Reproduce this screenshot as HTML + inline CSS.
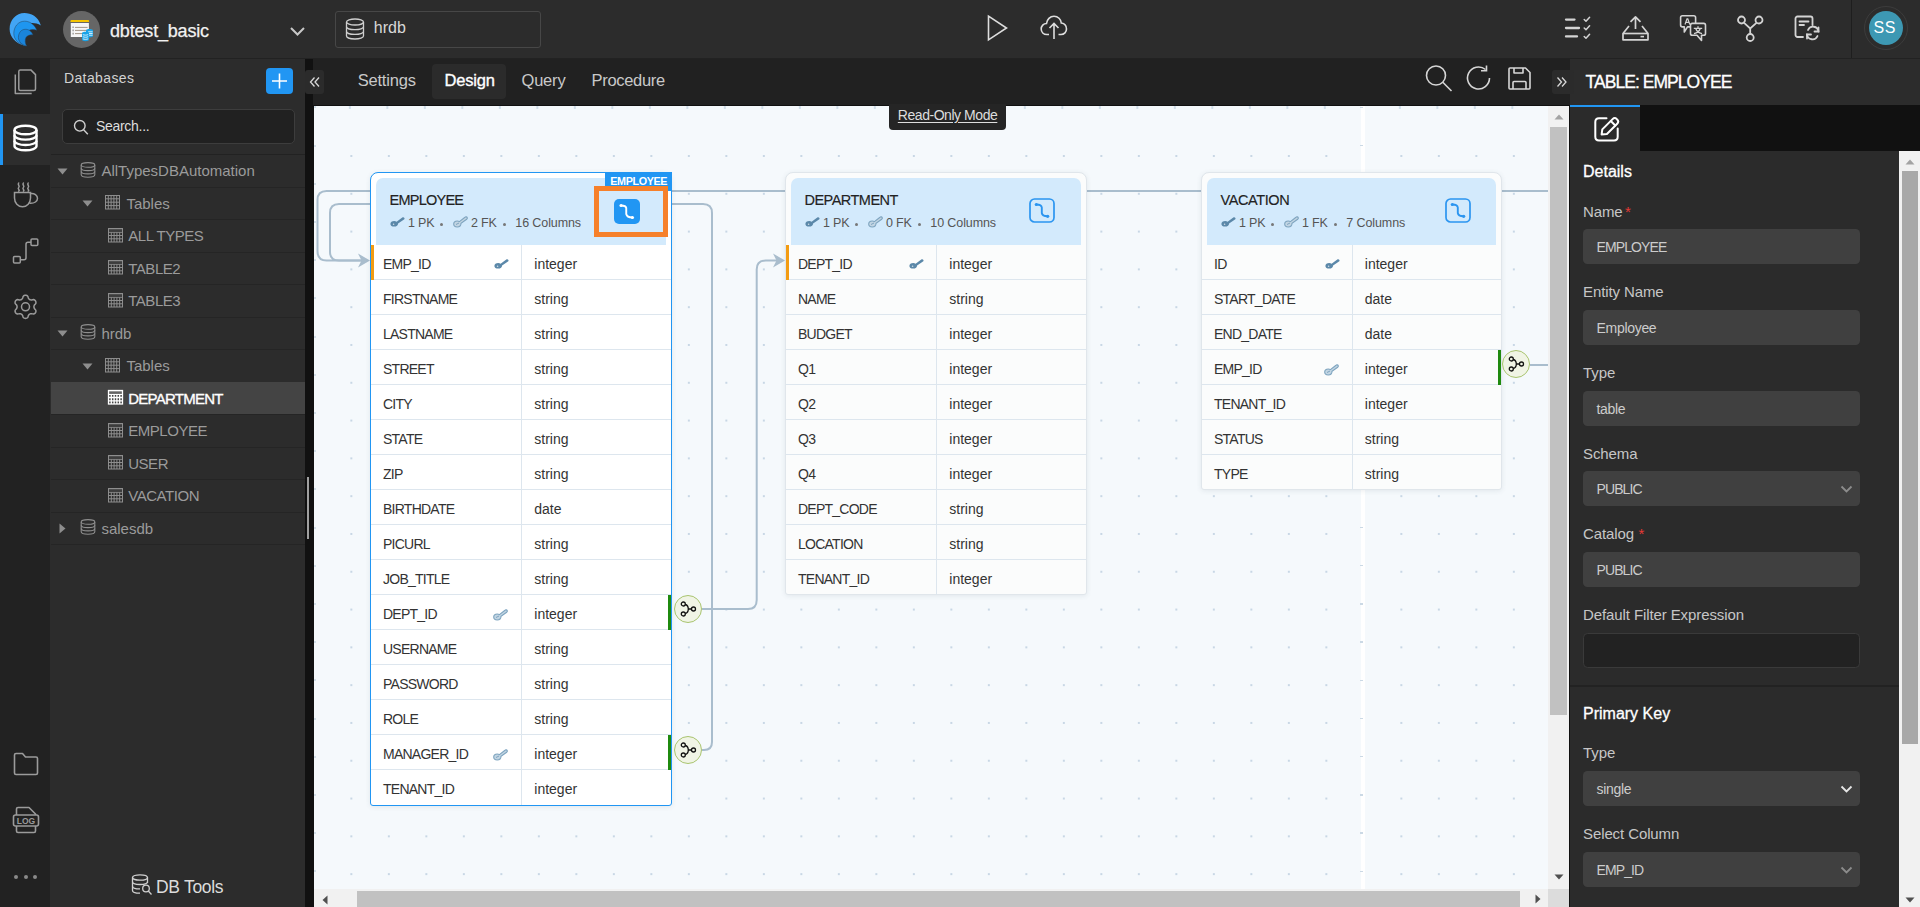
<!DOCTYPE html><html><head><meta charset="utf-8"><title>DB Design</title><style>
*{box-sizing:border-box;margin:0;padding:0}
html,body{width:1920px;height:907px;overflow:hidden;background:#2b2b2b;font-family:"Liberation Sans",sans-serif}
.a{position:absolute}
.t{position:absolute;white-space:nowrap;line-height:1}
svg{position:absolute;overflow:visible}
</style></head><body>
<div class="a" style="left:0px;top:0px;width:1920px;height:59px;background:#2c2c2c;border-bottom:1px solid #222"></div>
<div class="a" style="left:0px;top:59px;width:50px;height:848px;background:#222222"></div>
<div class="a" style="left:50px;top:59px;width:255px;height:848px;background:#2c2c2c"></div>
<div class="a" style="left:305px;top:59px;width:9px;height:848px;background:#111"></div>
<div class="a" style="left:313px;top:59px;width:1257px;height:46px;background:#212121"></div>
<div class="a" style="left:313px;top:105px;width:1257px;height:802px;background:#111"></div>
<div class="a" style="left:314px;top:106px;width:1255px;height:801px;background-color:#f5f9fc"></div>
<div class="a" style="left:316px;top:137px;width:1253px;height:770px;background-image:radial-gradient(circle,#c8d7e5 1.1px,transparent 1.3px);background-size:37.5px 37.8px;background-position:16.6px 0.1px"></div>
<div class="a" style="left:316px;top:106px;width:1253px;height:3px;background-image:radial-gradient(circle,#cfdde9 1.1px,transparent 1.3px);background-size:37.5px 3px;background-position:15.1px -0.2px"></div>
<div class="a" style="left:1361px;top:106px;width:4px;height:783px;background:#fff"></div>
<div class="a" style="left:314px;top:106.3px;width:1.5px;height:2px;background:#d3e0ea"></div>
<div class="a" style="left:314px;top:144.5px;width:1.5px;height:2px;background:#d3e0ea"></div>
<div class="a" style="left:314px;top:182.7px;width:1.5px;height:2px;background:#d3e0ea"></div>
<div class="a" style="left:314px;top:220.9px;width:1.5px;height:2px;background:#d3e0ea"></div>
<div class="a" style="left:314px;top:259.1px;width:1.5px;height:2px;background:#d3e0ea"></div>
<div class="a" style="left:314px;top:297.3px;width:1.5px;height:2px;background:#d3e0ea"></div>
<div class="a" style="left:314px;top:335.5px;width:1.5px;height:2px;background:#d3e0ea"></div>
<div class="a" style="left:314px;top:373.7px;width:1.5px;height:2px;background:#d3e0ea"></div>
<div class="a" style="left:314px;top:411.9px;width:1.5px;height:2px;background:#d3e0ea"></div>
<div class="a" style="left:314px;top:450.1px;width:1.5px;height:2px;background:#d3e0ea"></div>
<div class="a" style="left:314px;top:488.3px;width:1.5px;height:2px;background:#d3e0ea"></div>
<div class="a" style="left:314px;top:526.5px;width:1.5px;height:2px;background:#d3e0ea"></div>
<div class="a" style="left:314px;top:564.7px;width:1.5px;height:2px;background:#d3e0ea"></div>
<div class="a" style="left:314px;top:602.9px;width:1.5px;height:2px;background:#d3e0ea"></div>
<div class="a" style="left:314px;top:641.1px;width:1.5px;height:2px;background:#d3e0ea"></div>
<div class="a" style="left:314px;top:679.3px;width:1.5px;height:2px;background:#d3e0ea"></div>
<div class="a" style="left:314px;top:717.5px;width:1.5px;height:2px;background:#d3e0ea"></div>
<div class="a" style="left:314px;top:755.7px;width:1.5px;height:2px;background:#d3e0ea"></div>
<div class="a" style="left:314px;top:793.9px;width:1.5px;height:2px;background:#d3e0ea"></div>
<div class="a" style="left:314px;top:832.1px;width:1.5px;height:2px;background:#d3e0ea"></div>
<div class="a" style="left:314px;top:870.3px;width:1.5px;height:2px;background:#d3e0ea"></div>
<div class="a" style="left:1360px;top:106.5px;width:3px;height:1.6px;background:#cbd9e5"></div>
<div class="a" style="left:1360px;top:144.7px;width:3px;height:1.6px;background:#cbd9e5"></div>
<div class="a" style="left:1360px;top:526.7px;width:3px;height:1.6px;background:#cbd9e5"></div>
<div class="a" style="left:1360px;top:564.9px;width:3px;height:1.6px;background:#cbd9e5"></div>
<div class="a" style="left:1360px;top:603.1px;width:3px;height:1.6px;background:#cbd9e5"></div>
<div class="a" style="left:1360px;top:641.3px;width:3px;height:1.6px;background:#cbd9e5"></div>
<div class="a" style="left:1360px;top:679.5px;width:3px;height:1.6px;background:#cbd9e5"></div>
<div class="a" style="left:1360px;top:717.7px;width:3px;height:1.6px;background:#cbd9e5"></div>
<div class="a" style="left:1360px;top:755.9px;width:3px;height:1.6px;background:#cbd9e5"></div>
<div class="a" style="left:1360px;top:794.1px;width:3px;height:1.6px;background:#cbd9e5"></div>
<div class="a" style="left:1360px;top:832.3px;width:3px;height:1.6px;background:#cbd9e5"></div>
<div class="a" style="left:1360px;top:870.5px;width:3px;height:1.6px;background:#cbd9e5"></div>
<div class="a" style="left:1570px;top:59px;width:350px;height:46px;background:#2c2c2c"></div>
<div class="a" style="left:1570px;top:105px;width:350px;height:46px;background:#111"></div>
<div class="a" style="left:1570px;top:151px;width:329px;height:756px;background:#2b2b2b"></div>
<svg style="left:0px;top:0px;" width="50" height="50" viewBox="0 0 50 50"><path d="M40.9 25.5C38 16 31 12.9 24.5 12.9C16 12.9 9.6 20 9.6 29C9.6 37 16 43.5 24 45.5L26.5 46C21 41 19 35 21 30C24 23 33 21 40.9 25.5Z" fill="#42a5f5"/><path d="M36.9 30.2C34 23.5 29 21.2 24.5 21.2C18 21.2 13.8 27 13.8 33.5C13.8 39.5 19 44.5 26.5 46C23.5 42 23 37 25 34C27.5 30 32 28.5 36.9 30.2Z" fill="#1e96f0" stroke="#27425c" stroke-width="0.5"/><path d="M33 35C31.5 31 28.5 29.3 25.5 29.3C21 29.3 18.4 33 18.4 37.5C18.4 41.5 22 45 26.5 46C25 43 24.8 39.5 26 37.5C27.5 35.3 30 34.5 33 35Z" fill="#1a85dc" stroke="#27425c" stroke-width="0.5"/></svg>
<div class="a" style="left:63px;top:11px;width:37px;height:37px;border-radius:50%;background:#666"></div>
<svg style="left:62px;top:10px;" width="40" height="40" viewBox="0 0 40 40"><path d="M8.8 10.5H26.8L27.2 12.1H8.4Z" fill="#f5c400"/><rect x="8.8" y="9.9" width="18" height="2.2" rx="0.6" fill="#f5c400"/><rect x="8.8" y="13" width="18.1" height="14" fill="#f6f6f6"/><path d="M13 17.4H25.6M13 20.4H25.6M13 23.6H25.6" stroke="#8b7b68" stroke-width="0.8"/><path d="M10.5 16.5h1.2v1.6h-1.2zM10.5 19.6h1.2v1.6h-1.2zM10.5 22.8h1.2v1.6h-1.2z" fill="#8a8a8a"/><path d="M24 20.3C24 19.5 25.6 18.9 27.5 18.9S31 19.5 31 20.3V26C31 26.8 29.4 27.4 27.5 27.4S24 26.8 24 26Z" fill="#1aa3e8"/><path d="M26.2 21.8H30.6M26.2 23.5H30.6M26.2 25.2H30.6" stroke="#fff" stroke-width="0.8"/><path d="M20 23.1C20 22.3 21.6 21.7 23.5 21.7S27 22.3 27 23.1V29.8C27 30.6 25.4 31.2 23.5 31.2S20 30.6 20 29.8Z" fill="#1aa3e8"/><path d="M20.8 24.6C22.3 25.3 24.7 25.3 26.2 24.6M20.8 26.7C22.3 27.4 24.7 27.4 26.2 26.7M20.8 28.8C22.3 29.5 24.7 29.5 26.2 28.8" stroke="#fff" stroke-width="0.8" fill="none"/></svg>
<div class="t" style="left:110.00px;top:21.66px;font-size:18px;color:#f2f2f2;font-weight:normal;letter-spacing:-0.18px;-webkit-text-stroke:0.25px #f2f2f2">dbtest_basic</div>
<svg style="left:289px;top:26px;" width="17" height="10" viewBox="0 0 17 10"><path d="M2 2 L8.5 8.5 L15 2" fill="none" stroke="#c8c8c8" stroke-width="2"/></svg>
<div class="a" style="left:335px;top:11px;width:206px;height:37px;border:1px solid #474747;border-radius:3px"></div>
<svg style="left:345px;top:18px;" width="20" height="22" viewBox="0 0 20 22"><g fill="none" stroke="#cfcfcf" stroke-width="1.3"><ellipse cx="10" cy="4" rx="8.5" ry="3"/><path d="M1.5 4v14c0 1.7 3.8 3 8.5 3s8.5-1.3 8.5-3V4"/><path d="M1.5 8.7c0 1.7 3.8 3 8.5 3s8.5-1.3 8.5-3M1.5 13.4c0 1.7 3.8 3 8.5 3s8.5-1.3 8.5-3"/></g></svg>
<div class="t" style="left:373.80px;top:19.96px;font-size:16px;color:#d8d8d8;font-weight:normal;letter-spacing:0px;">hrdb</div>
<svg style="left:986px;top:14px;" width="23" height="28" viewBox="0 0 23 28"><path d="M2.5 2.2 L20.5 14 L2.5 25.8Z" fill="none" stroke="#dedede" stroke-width="1.6" stroke-linejoin="miter"/></svg>
<svg style="left:1040px;top:15px;" width="28" height="25" viewBox="0 0 28 25"><g fill="none" stroke="#dedede" stroke-width="1.6"><path d="M9 19.5H7C3.5 19.5 1.2 17 1.2 14C1.2 11 3.5 8.5 6.5 8.5C7 4.5 10 1.3 14 1.3C18 1.3 21 4.3 21.3 8C24.5 8.5 26.5 11 26.5 14C26.5 17 24.2 19.5 21 19.5H18.5"/><path d="M14 24V8.5M9.5 13L14 8.5L18.5 13"/></g></svg>
<svg style="left:1560px;top:10px;" width="35" height="35" viewBox="0 0 35 35"><g fill="none" stroke="#d4d4d4" stroke-width="2.3" stroke-linecap="round"><path d="M6 9.6H14.5M6 18H19M6 26.4H17"/></g><g fill="none" stroke="#d4d4d4" stroke-width="1.5" stroke-linecap="round" stroke-linejoin="round"><path d="M24.2 9.5L26 11.3L29.6 7.3M24.2 18L26 19.8L29.6 15.8M24.2 26.5L26 28.3L29.6 24.3"/></g></svg>
<svg style="left:1621px;top:15px;" width="29" height="27" viewBox="0 0 29 27"><g fill="none" stroke="#d4d4d4" stroke-width="1.7" stroke-linejoin="round"><path d="M14.5 14V2M9.5 6.8L14.5 1.8L19.5 6.8"/><path d="M8 11L2 18.5V24.8H27V18.5L21 11"/><path d="M2 18.5H27"/></g><rect x="19.5" y="20.8" width="3.5" height="1.6" fill="#d4d4d4"/></svg>
<svg style="left:1672px;top:8px;" width="40" height="40" viewBox="0 0 40 40"><g stroke="#d4d4d4" stroke-width="1.6" stroke-linejoin="round"><path d="M10.4 7.7H21.8Q23.6 7.7 23.6 9.5V17.1Q23.6 18.9 21.8 18.9H15.5L12.3 24V18.9H10.4Q8.6 18.9 8.6 17.1V9.5Q8.6 7.7 10.4 7.7Z" fill="none"/><path d="M20.3 15.4H31.7Q33.5 15.4 33.5 17.2V25.5Q33.5 27.3 31.7 27.3H29.5V32.5L25 27.3H20.3Q18.5 27.3 18.5 25.5V17.2Q18.5 15.4 20.3 15.4Z" fill="#2c2c2c"/></g><path d="M13 16.5L15 10.8H15.8L17.8 16.5M13.8 14.4H17" fill="none" stroke="#d4d4d4" stroke-width="1.2"/><path d="M21.8 20.3H30.2M26 18.3V20.3M23.6 20.3C24.6 23.3 27 25 30 25.6M28.4 20.3C27.4 23.3 25 25 22 25.6" fill="none" stroke="#d4d4d4" stroke-width="1.3"/></svg>
<svg style="left:1736px;top:15px;" width="29" height="28" viewBox="0 0 29 28"><g fill="none" stroke="#d4d4d4" stroke-width="1.8"><circle cx="5.5" cy="5" r="3.5"/><circle cx="23" cy="5" r="3.5"/><circle cx="14.2" cy="22.5" r="3.5"/><path d="M7.8 7.7L14.2 13.5L20.7 7.7M14.2 13.5V19"/></g></svg>
<svg style="left:1794px;top:15px;" width="28" height="26" viewBox="0 0 28 26"><g fill="none" stroke="#d4d4d4" stroke-width="1.8" stroke-linecap="round"><path d="M9 22H3.5C2.4 22 1.5 21.1 1.5 20V3.5C1.5 2.4 2.4 1.5 3.5 1.5H16.5C17.6 1.5 18.5 2.4 18.5 3.5V10"/><path d="M5.5 6.5H14.5M5.5 10H10"/><path d="M24.5 16.5A5.5 5.5 0 0 0 14 15M13 19.5A5.5 5.5 0 0 0 23.5 21"/><path d="M24.5 12.5V16.5H20.5M13 23.5V19.5H17"/></g></svg>
<div class="a" style="left:1851px;top:0px;width:1px;height:58px;background:#1e1e1e"></div>
<div class="a" style="left:1864px;top:5.5px;width:44px;height:44px;border-radius:50%;border:1px solid #3c3c3c"></div>
<div class="a" style="left:1869px;top:10.5px;width:34px;height:34px;border-radius:50%;background:#3d98b3"></div>
<div class="t" style="left:1873.50px;top:19.96px;font-size:16px;color:#ffffff;font-weight:normal;letter-spacing:0.5px;">SS</div>
<div class="a" style="left:0px;top:114px;width:50px;height:51px;background:#2d2d2d"></div>
<div class="a" style="left:0px;top:114px;width:3px;height:51px;background:#2196f3"></div>
<svg style="left:13px;top:67px;" width="26" height="29" viewBox="0 0 26 29"><g fill="none" stroke="#9b9b9b" stroke-width="1.5" stroke-linejoin="round"><path d="M7.3 2.9H17.8L22.5 7.6V22.1C22.5 22.9 21.8 23.6 21 23.6H7.3C6.5 23.6 5.8 22.9 5.8 22.1V4.4C5.8 3.6 6.5 2.9 7.3 2.9Z"/><path d="M2.3 7.4V26.4H18.7"/></g></svg>
<svg style="left:12px;top:124px;" width="27" height="28" viewBox="0 0 27 28"><g fill="none" stroke="#fff" stroke-width="2.4"><ellipse cx="13.5" cy="6" rx="11" ry="4.3"/><path d="M2.5 6V22C2.5 24.4 7.4 26.3 13.5 26.3S24.5 24.4 24.5 22V6"/><path d="M2.5 11.3C2.5 13.7 7.4 15.6 13.5 15.6S24.5 13.7 24.5 11.3M2.5 16.7C2.5 19.1 7.4 21 13.5 21S24.5 19.1 24.5 16.7"/></g></svg>
<svg style="left:0px;top:170px;" width="50" height="100" viewBox="0 0 50 100"><g fill="none" stroke="#9b9b9b" stroke-width="1.5" stroke-linecap="round"><path d="M14.5 22.5H30.5V28C30.5 32.8 27 36.8 22.5 36.8S14.5 32.8 14.5 28Z"/><path d="M30.5 23.5C34.5 23 37.5 25.3 37.5 28.3S34.5 33.5 30 33.3"/><path d="M18.7 13C16.9 14.5 20.5 16 18.7 17.5S20.5 20 18.7 21.2M23.4 13C21.6 14.5 25.2 16 23.4 17.5S25.2 20 23.4 21.2M28.2 13C26.4 14.5 30 16 28.2 17.5S30 20 28.2 21.2"/></g><g fill="none" stroke="#9b9b9b" stroke-width="1.5" stroke-linejoin="round"><rect x="13.5" y="86.5" width="6.8" height="6.5" rx="1"/><rect x="31" y="69" width="6.8" height="6.5" rx="1"/><path d="M20.3 89.8H24C25.3 89.8 26 89.1 26 87.8V74.3C26 73 26.7 72.3 28 72.3H31"/></g></svg>
<svg style="left:12px;top:293px;" width="28" height="28" viewBox="0 0 28 28"><g fill="none" stroke="#9b9b9b" stroke-width="1.5" stroke-linejoin="round"><path d="M21.90 13.80 L21.94 14.24 L22.04 14.70 L22.23 15.18 L22.51 15.71 L23.16 16.39 L23.76 17.13 L23.92 17.80 L23.92 18.44 L23.79 19.04 L23.55 19.60 L23.19 20.09 L22.73 20.51 L22.18 20.83 L21.52 21.02 L20.57 20.87 L19.66 20.64 L19.06 20.67 L18.55 20.75 L18.10 20.88 L17.70 21.07 L17.34 21.33 L16.99 21.65 L16.67 22.05 L16.35 22.56 L16.09 23.46 L15.74 24.36 L15.25 24.83 L14.69 25.15 L14.10 25.34 L13.50 25.40 L12.90 25.34 L12.31 25.15 L11.75 24.83 L11.26 24.36 L10.91 23.46 L10.65 22.56 L10.33 22.05 L10.01 21.65 L9.66 21.33 L9.30 21.07 L8.90 20.88 L8.45 20.75 L7.94 20.67 L7.34 20.64 L6.43 20.87 L5.48 21.02 L4.82 20.83 L4.27 20.51 L3.81 20.09 L3.45 19.60 L3.21 19.04 L3.08 18.44 L3.08 17.80 L3.24 17.13 L3.84 16.39 L4.49 15.71 L4.77 15.18 L4.96 14.70 L5.06 14.24 L5.10 13.80 L5.06 13.36 L4.96 12.90 L4.77 12.42 L4.49 11.89 L3.84 11.21 L3.24 10.47 L3.08 9.80 L3.08 9.16 L3.21 8.56 L3.45 8.00 L3.81 7.51 L4.27 7.09 L4.82 6.77 L5.48 6.58 L6.43 6.73 L7.34 6.96 L7.94 6.93 L8.45 6.85 L8.90 6.72 L9.30 6.53 L9.66 6.27 L10.01 5.95 L10.33 5.55 L10.65 5.04 L10.91 4.14 L11.26 3.24 L11.75 2.77 L12.31 2.45 L12.90 2.26 L13.50 2.20 L14.10 2.26 L14.69 2.45 L15.25 2.77 L15.74 3.24 L16.09 4.14 L16.35 5.04 L16.67 5.55 L16.99 5.95 L17.34 6.27 L17.70 6.53 L18.10 6.72 L18.55 6.85 L19.06 6.93 L19.66 6.96 L20.57 6.73 L21.52 6.58 L22.18 6.77 L22.73 7.09 L23.19 7.51 L23.55 8.00 L23.79 8.56 L23.92 9.16 L23.92 9.80 L23.76 10.47 L23.16 11.21 L22.51 11.89 L22.23 12.42 L22.04 12.90 L21.94 13.36Z"/><circle cx="13.5" cy="13.8" r="4"/></g></svg>
<svg style="left:12px;top:752px;" width="28" height="24" viewBox="0 0 28 24"><g fill="none" stroke="#9b9b9b" stroke-width="1.6" stroke-linejoin="round"><path d="M2.5 3C2.5 2 3 1.5 4 1.5H10.5L13.5 5H24C25 5 25.5 5.5 25.5 6.5V21C25.5 22 25 22.5 24 22.5H4C3 22.5 2.5 22 2.5 21Z"/></g></svg>
<svg style="left:12px;top:806px;" width="28" height="28" viewBox="0 0 28 28"><g fill="none" stroke="#9b9b9b" stroke-width="1.6" stroke-linejoin="round"><path d="M4.5 9V3C4.5 2 5 1.5 6 1.5H17L23.5 8V9"/><path d="M4.5 20V25C4.5 26 5 26.5 6 26.5H22C23 26.5 23.5 26 23.5 25V20"/><rect x="1.5" y="9" width="25" height="11" rx="2"/></g><text x="14" y="17.8" text-anchor="middle" font-size="8.5" font-weight="bold" font-family="Liberation Sans" fill="#9b9b9b">LOG</text></svg>
<div class="a" style="left:14.2px;top:874.6px;width:4px;height:4px;border-radius:50%;background:#8a8a8a"></div>
<div class="a" style="left:23.6px;top:874.6px;width:4px;height:4px;border-radius:50%;background:#8a8a8a"></div>
<div class="a" style="left:32.6px;top:874.6px;width:4px;height:4px;border-radius:50%;background:#8a8a8a"></div>
<div class="t" style="left:63.90px;top:71.15px;font-size:14px;color:#d2d2d2;font-weight:normal;letter-spacing:0.4px;">Databases</div>
<div class="a" style="left:266px;top:68px;width:27px;height:26px;border-radius:4px;background:#2196f3"></div>
<svg style="left:266px;top:68px;" width="27" height="26" viewBox="0 0 27 26"><path d="M13.5 5.5V20.5M6 13H21" stroke="#fff" stroke-width="1.6"/></svg>
<div class="a" style="left:61.5px;top:109px;width:233px;height:34.5px;border-radius:5px;background:#212121;border:1px solid #3d3d3d"></div>
<svg style="left:73px;top:119px;" width="16" height="17" viewBox="0 0 16 17"><g fill="none" stroke="#d0d0d0" stroke-width="1.4"><circle cx="6.8" cy="6.8" r="5.3"/><path d="M10.6 10.8L14.8 15.2"/></g></svg>
<div class="t" style="left:96.00px;top:119.05px;font-size:14px;color:#dedede;font-weight:normal;letter-spacing:-0.3px;">Search...</div>
<div class="a" style="left:51px;top:154px;width:254px;height:1px;background:#222"></div>
<div class="a" style="left:51px;top:186.5px;width:254px;height:1px;background:#252525"></div>
<svg style="left:57px;top:167.5px;" width="11" height="7" viewBox="0 0 11 7"><path d="M0.5 0.5H10.5L5.5 6.5Z" fill="#8e8e8e"/></svg>
<svg style="left:79.5px;top:161.5px;" width="16" height="16" viewBox="0 0 16 16"><g fill="none" stroke="#8e8e8e" stroke-width="1.1"><ellipse cx="8" cy="2.9" rx="6.8" ry="2.3"/><path d="M1.2 2.9V12.8C1.2 14.1 4.2 15.2 8 15.2S14.8 14.1 14.8 12.8V2.9"/><path d="M1.2 6.2C1.2 7.5 4.2 8.6 8 8.6S14.8 7.5 14.8 6.2M1.2 9.5C1.2 10.8 4.2 11.9 8 11.9S14.8 10.8 14.8 9.5"/></g></svg>
<div class="t" style="left:101.40px;top:163.30px;font-size:15px;color:#9b9b9b;font-weight:normal;letter-spacing:0px;">AllTypesDBAutomation</div>
<div class="a" style="left:51px;top:219.0px;width:254px;height:1px;background:#252525"></div>
<svg style="left:82px;top:200.0px;" width="11" height="7" viewBox="0 0 11 7"><path d="M0.5 0.5H10.5L5.5 6.5Z" fill="#8e8e8e"/></svg>
<svg style="left:104.8px;top:195.2px;" width="15" height="15" viewBox="0 0 15 15"><g fill="none" stroke="#8e8e8e" stroke-width="1.0"><rect x="0.5" y="0.5" width="14" height="13.5"/><path d="M0.5 3.8H14.5M0.5 7.2H14.5M0.5 10.6H14.5M3.3 0.5V14M6.1 0.5V14M8.9 0.5V14M11.7 0.5V14"/></g></svg>
<div class="t" style="left:126.40px;top:195.80px;font-size:15px;color:#9b9b9b;font-weight:normal;letter-spacing:0px;">Tables</div>
<div class="a" style="left:51px;top:251.5px;width:254px;height:1px;background:#252525"></div>
<svg style="left:107.6px;top:227.7px;" width="15" height="15" viewBox="0 0 15 15"><g fill="none" stroke="#8e8e8e" stroke-width="1.0"><rect x="0.5" y="0.5" width="14" height="13.5"/><path d="M0.5 4.3H14.5M0.5 7.5H14.5M0.5 10.8H14.5M3.3 4.3V14M6.1 4.3V14M8.9 4.3V14M11.7 4.3V14"/></g><rect x="0.5" y="0.5" width="14" height="2" fill="#8e8e8e" opacity="0.35"/></svg>
<div class="t" style="left:128.20px;top:228.30px;font-size:15px;color:#9b9b9b;font-weight:normal;letter-spacing:-0.45px;">ALL TYPES</div>
<div class="a" style="left:51px;top:284.0px;width:254px;height:1px;background:#252525"></div>
<svg style="left:107.6px;top:260.2px;" width="15" height="15" viewBox="0 0 15 15"><g fill="none" stroke="#8e8e8e" stroke-width="1.0"><rect x="0.5" y="0.5" width="14" height="13.5"/><path d="M0.5 4.3H14.5M0.5 7.5H14.5M0.5 10.8H14.5M3.3 4.3V14M6.1 4.3V14M8.9 4.3V14M11.7 4.3V14"/></g><rect x="0.5" y="0.5" width="14" height="2" fill="#8e8e8e" opacity="0.35"/></svg>
<div class="t" style="left:128.20px;top:260.80px;font-size:15px;color:#9b9b9b;font-weight:normal;letter-spacing:-0.45px;">TABLE2</div>
<div class="a" style="left:51px;top:316.5px;width:254px;height:1px;background:#252525"></div>
<svg style="left:107.6px;top:292.7px;" width="15" height="15" viewBox="0 0 15 15"><g fill="none" stroke="#8e8e8e" stroke-width="1.0"><rect x="0.5" y="0.5" width="14" height="13.5"/><path d="M0.5 4.3H14.5M0.5 7.5H14.5M0.5 10.8H14.5M3.3 4.3V14M6.1 4.3V14M8.9 4.3V14M11.7 4.3V14"/></g><rect x="0.5" y="0.5" width="14" height="2" fill="#8e8e8e" opacity="0.35"/></svg>
<div class="t" style="left:128.20px;top:293.30px;font-size:15px;color:#9b9b9b;font-weight:normal;letter-spacing:-0.45px;">TABLE3</div>
<div class="a" style="left:51px;top:349.0px;width:254px;height:1px;background:#252525"></div>
<svg style="left:57px;top:330.0px;" width="11" height="7" viewBox="0 0 11 7"><path d="M0.5 0.5H10.5L5.5 6.5Z" fill="#8e8e8e"/></svg>
<svg style="left:79.5px;top:324.0px;" width="16" height="16" viewBox="0 0 16 16"><g fill="none" stroke="#8e8e8e" stroke-width="1.1"><ellipse cx="8" cy="2.9" rx="6.8" ry="2.3"/><path d="M1.2 2.9V12.8C1.2 14.1 4.2 15.2 8 15.2S14.8 14.1 14.8 12.8V2.9"/><path d="M1.2 6.2C1.2 7.5 4.2 8.6 8 8.6S14.8 7.5 14.8 6.2M1.2 9.5C1.2 10.8 4.2 11.9 8 11.9S14.8 10.8 14.8 9.5"/></g></svg>
<div class="t" style="left:101.40px;top:325.80px;font-size:15px;color:#9b9b9b;font-weight:normal;letter-spacing:0px;">hrdb</div>
<div class="a" style="left:51px;top:381.5px;width:254px;height:1px;background:#252525"></div>
<svg style="left:82px;top:362.5px;" width="11" height="7" viewBox="0 0 11 7"><path d="M0.5 0.5H10.5L5.5 6.5Z" fill="#8e8e8e"/></svg>
<svg style="left:104.8px;top:357.7px;" width="15" height="15" viewBox="0 0 15 15"><g fill="none" stroke="#8e8e8e" stroke-width="1.0"><rect x="0.5" y="0.5" width="14" height="13.5"/><path d="M0.5 3.8H14.5M0.5 7.2H14.5M0.5 10.6H14.5M3.3 0.5V14M6.1 0.5V14M8.9 0.5V14M11.7 0.5V14"/></g></svg>
<div class="t" style="left:126.40px;top:358.30px;font-size:15px;color:#9b9b9b;font-weight:normal;letter-spacing:0px;">Tables</div>
<div class="a" style="left:51px;top:382.0px;width:254px;height:32px;background:#444444"></div>
<div class="a" style="left:51px;top:414.0px;width:254px;height:1px;background:#252525"></div>
<svg style="left:107.6px;top:390.2px;" width="15" height="15" viewBox="0 0 15 15"><g fill="none" stroke="#ffffff" stroke-width="1.3"><rect x="0.5" y="0.5" width="14" height="13.5"/><path d="M0.5 4.3H14.5M0.5 7.5H14.5M0.5 10.8H14.5M3.3 4.3V14M6.1 4.3V14M8.9 4.3V14M11.7 4.3V14"/></g><rect x="0.5" y="0.5" width="14" height="2" fill="#ffffff" opacity="0.35"/></svg>
<div class="t" style="left:128.20px;top:390.80px;font-size:15px;color:#ffffff;font-weight:normal;letter-spacing:-0.75px;-webkit-text-stroke:0.35px #fff">DEPARTMENT</div>
<div class="a" style="left:51px;top:446.5px;width:254px;height:1px;background:#252525"></div>
<svg style="left:107.6px;top:422.7px;" width="15" height="15" viewBox="0 0 15 15"><g fill="none" stroke="#8e8e8e" stroke-width="1.0"><rect x="0.5" y="0.5" width="14" height="13.5"/><path d="M0.5 4.3H14.5M0.5 7.5H14.5M0.5 10.8H14.5M3.3 4.3V14M6.1 4.3V14M8.9 4.3V14M11.7 4.3V14"/></g><rect x="0.5" y="0.5" width="14" height="2" fill="#8e8e8e" opacity="0.35"/></svg>
<div class="t" style="left:128.20px;top:423.30px;font-size:15px;color:#9b9b9b;font-weight:normal;letter-spacing:-0.45px;">EMPLOYEE</div>
<div class="a" style="left:51px;top:479.0px;width:254px;height:1px;background:#252525"></div>
<svg style="left:107.6px;top:455.2px;" width="15" height="15" viewBox="0 0 15 15"><g fill="none" stroke="#8e8e8e" stroke-width="1.0"><rect x="0.5" y="0.5" width="14" height="13.5"/><path d="M0.5 4.3H14.5M0.5 7.5H14.5M0.5 10.8H14.5M3.3 4.3V14M6.1 4.3V14M8.9 4.3V14M11.7 4.3V14"/></g><rect x="0.5" y="0.5" width="14" height="2" fill="#8e8e8e" opacity="0.35"/></svg>
<div class="t" style="left:128.20px;top:455.80px;font-size:15px;color:#9b9b9b;font-weight:normal;letter-spacing:-0.45px;">USER</div>
<div class="a" style="left:51px;top:511.5px;width:254px;height:1px;background:#252525"></div>
<svg style="left:107.6px;top:487.7px;" width="15" height="15" viewBox="0 0 15 15"><g fill="none" stroke="#8e8e8e" stroke-width="1.0"><rect x="0.5" y="0.5" width="14" height="13.5"/><path d="M0.5 4.3H14.5M0.5 7.5H14.5M0.5 10.8H14.5M3.3 4.3V14M6.1 4.3V14M8.9 4.3V14M11.7 4.3V14"/></g><rect x="0.5" y="0.5" width="14" height="2" fill="#8e8e8e" opacity="0.35"/></svg>
<div class="t" style="left:128.20px;top:488.30px;font-size:15px;color:#9b9b9b;font-weight:normal;letter-spacing:-0.45px;">VACATION</div>
<div class="a" style="left:51px;top:544.0px;width:254px;height:1px;background:#252525"></div>
<svg style="left:59px;top:522.5px;" width="7" height="11" viewBox="0 0 7 11"><path d="M0.5 0.5V10.5L6.5 5.5Z" fill="#8e8e8e"/></svg>
<svg style="left:79.5px;top:519.0px;" width="16" height="16" viewBox="0 0 16 16"><g fill="none" stroke="#8e8e8e" stroke-width="1.1"><ellipse cx="8" cy="2.9" rx="6.8" ry="2.3"/><path d="M1.2 2.9V12.8C1.2 14.1 4.2 15.2 8 15.2S14.8 14.1 14.8 12.8V2.9"/><path d="M1.2 6.2C1.2 7.5 4.2 8.6 8 8.6S14.8 7.5 14.8 6.2M1.2 9.5C1.2 10.8 4.2 11.9 8 11.9S14.8 10.8 14.8 9.5"/></g></svg>
<div class="t" style="left:101.40px;top:520.80px;font-size:15px;color:#9b9b9b;font-weight:normal;letter-spacing:0px;">salesdb</div>
<div class="a" style="left:306.5px;top:477px;width:2px;height:62px;background:#a0a0a0"></div>
<svg style="left:131px;top:874px;" width="22" height="22" viewBox="0 0 22 22"><g fill="none" stroke="#d0d0d0" stroke-width="1.3"><ellipse cx="9" cy="3.5" rx="7.5" ry="2.7"/><path d="M1.5 3.5V16.5C1.5 18 4.8 19.2 9 19.2"/><path d="M16.5 3.5V9"/><path d="M1.5 7.8C1.5 9.3 4.8 10.5 9 10.5S16.5 9.3 16.5 7.8M1.5 12.2C1.5 13.7 4.8 14.9 9 14.9"/><circle cx="15" cy="14.5" r="3.3"/><path d="M17.3 17L20.5 20.5"/></g></svg>
<div class="t" style="left:156.00px;top:878.99px;font-size:17.5px;color:#dcdcdc;font-weight:normal;letter-spacing:-0.3px;">DB Tools</div>
<div class="a" style="left:305px;top:70px;width:19px;height:24px;border-radius:3px;background:#2b2b2b"></div>
<svg style="left:308px;top:75px;" width="14" height="14" viewBox="0 0 14 14"><g fill="none" stroke="#d8d8d8" stroke-width="1.3"><path d="M6.5 2.5L2.5 7L6.5 11.5M11 2.5L7 7L11 11.5"/></g></svg>
<div class="t" style="left:357.70px;top:72.23px;font-size:16.5px;color:#c9c9c9;font-weight:normal;letter-spacing:-0.2px;">Settings</div>
<div class="a" style="left:432px;top:64px;width:74px;height:35px;border-radius:4px;background:#2b2b2b"></div>
<div class="t" style="left:444.50px;top:72.23px;font-size:16.5px;color:#ffffff;font-weight:normal;letter-spacing:-0.2px;-webkit-text-stroke:0.35px #fff">Design</div>
<div class="t" style="left:521.50px;top:72.23px;font-size:16.5px;color:#c9c9c9;font-weight:normal;letter-spacing:-0.2px;">Query</div>
<div class="t" style="left:591.50px;top:72.23px;font-size:16.5px;color:#c9c9c9;font-weight:normal;letter-spacing:-0.3px;">Procedure</div>
<svg style="left:1424px;top:64px;" width="30" height="29" viewBox="0 0 30 29"><g fill="none" stroke="#d6d6d6" stroke-width="1.6"><circle cx="12" cy="11.5" r="9.5"/><path d="M18.8 18.3L27.5 27"/></g></svg>
<svg style="left:1465px;top:64px;" width="28" height="28" viewBox="0 0 28 28"><g fill="none" stroke="#d6d6d6" stroke-width="1.6"><path d="M24.5 14A11 11 0 1 1 20.5 5.5"/><path d="M21.5 1.5V6.8H16"/></g></svg>
<svg style="left:1507px;top:66px;" width="25" height="25" viewBox="0 0 25 25"><g fill="none" stroke="#d6d6d6" stroke-width="1.6" stroke-linejoin="round"><path d="M2 3C2 2.4 2.4 2 3 2H18.5L23 6.5V22C23 22.6 22.6 23 22 23H3C2.4 23 2 22.6 2 22Z"/><path d="M7 2V7H16V2"/><path d="M6 23V16.5C6 16 6.4 15.5 7 15.5H18C18.6 15.5 19 16 19 16.5V23"/></g></svg>
<div class="a" style="left:1551.5px;top:70px;width:22px;height:23.5px;border-radius:3px;background:#2b2b2b"></div>
<svg style="left:1555px;top:75px;" width="14" height="14" viewBox="0 0 14 14"><g fill="none" stroke="#d8d8d8" stroke-width="1.3"><path d="M2.5 2.5L6.5 7L2.5 11.5M7 2.5L11 7L7 11.5"/></g></svg>
<div class="t" style="left:887.00px;top:115.00px;font-size:0px;color:#000;font-weight:normal;letter-spacing:0px;"></div>
<div class="a" style="left:889px;top:104px;width:117px;height:25.5px;border-radius:0 0 4px 4px;background:#252525"></div>
<div class="t" style="left:897.80px;top:108.15px;font-size:14px;color:#dddddd;font-weight:normal;letter-spacing:-0.45px;text-decoration:underline;text-underline-offset:1.5px">Read-Only Mode</div>
<svg style="left:0px;top:0px;" width="1920" height="907" viewBox="0 0 1920 907"><g fill="none" stroke="#a9bdcd" stroke-width="2"><path d="M1530 365H1548Q1552 365 1552 361V195Q1552 191 1548 191H326.5Q317.5 191 317.5 200V251Q317.5 260.5 326.5 260.5H362"/><path d="M702 750H704Q712 750 712 742V213Q712 204 703 204H339Q330 204 330 213V252Q330 260.5 339 260.5H362"/><path d="M702 609H748Q756.7 609 756.7 600V269.5Q756.7 260.5 765.7 260.5H777"/></g><path d="M370 260.5L358 253.5L361.5 260.5L358 267.5Z" fill="#a9bdcd"/><path d="M785 260.5L773 253.5L776.5 260.5L773 267.5Z" fill="#a9bdcd"/></svg>
<div class="a" style="left:370px;top:172px;width:302px;height:634px;border:1px solid #2196f3;border-radius:8px 8px 3px 3px;background:#ffffff;box-shadow:0 1px 5px rgba(60,80,100,0.10)"></div>
<div class="a" style="left:376px;top:178px;width:290px;height:67px;background:#d3eafc;border-radius:7px 7px 0 0"></div>
<div class="t" style="left:389.50px;top:192.73px;font-size:14.5px;color:#222;font-weight:normal;letter-spacing:-0.75px;-webkit-text-stroke:0.15px #222">EMPLOYEE</div>
<svg style="left:390px;top:216.5px;" width="15" height="10" viewBox="0 0 15 10"><path d="M4.2 9.6C1.8 9.6 0.4 8.4 0.4 6.9C0.4 5.2 2 4 4.2 4C5.2 4 6 4.3 6.6 4.7L12.3 0.6C13 0.1 14 0.3 14.4 1C14.7 1.5 14.6 2.1 14 2.5L8.1 6.4C8.1 8.3 6.6 9.6 4.2 9.6Z" fill="#5b88a9"/><circle cx="3.6" cy="7.2" r="0.8" fill="#fff" opacity="0.7"/></svg>
<div class="t" style="left:408.00px;top:216.72px;font-size:12.5px;color:#555;font-weight:normal;letter-spacing:-0.2px;">1 PK</div>
<div class="a" style="left:440px;top:223px;width:3px;height:3px;border-radius:50%;background:#777"></div>
<svg style="left:452.5px;top:215.5px;" width="15" height="12" viewBox="0 0 15 12"><path d="M4.2 11C2 11 0.7 9.7 0.7 8.1C0.7 6.3 2.2 5 4.3 5C5.1 5 5.8 5.2 6.4 5.6L12 1.2C12.7 0.6 13.8 0.8 14.2 1.6C14.5 2.2 14.3 2.9 13.7 3.3L8 7.3C8 9.5 6.5 11 4.2 11Z" fill="#c2d5e3" stroke="#7ea4bf" stroke-width="1.1"/><path d="M3 8.5L6 7" stroke="#7ea4bf" stroke-width="1"/></svg>
<div class="t" style="left:471.00px;top:216.72px;font-size:12.5px;color:#555;font-weight:normal;letter-spacing:-0.2px;">2 FK</div>
<div class="a" style="left:503px;top:223px;width:3px;height:3px;border-radius:50%;background:#777"></div>
<div class="t" style="left:515.30px;top:216.72px;font-size:12.5px;color:#555;font-weight:normal;letter-spacing:-0.1px;">16 Columns</div>
<div class="a" style="left:614px;top:199px;width:25.5px;height:25px;border-radius:5px;background:#2196f3"></div>
<svg style="left:614px;top:199px;" width="25.5" height="25" viewBox="0 0 25 25"><path d="M7 6.5C9.5 6.5 11.5 6.8 12 9V15C12.5 17.5 15 18.5 18 18.5" fill="none" stroke="#fff" stroke-width="1.9" stroke-linecap="round"/><circle cx="6.8" cy="6.5" r="1.6" fill="#fff"/><circle cx="18.2" cy="18.5" r="1.6" fill="#fff"/></svg>
<div class="a" style="left:521px;top:245px;width:1px;height:560px;background:#dde6ee"></div>
<div class="a" style="left:371px;top:279px;width:300px;height:1px;background:#dde6ee"></div>
<div class="t" style="left:383.00px;top:257.35px;font-size:14px;color:#333;font-weight:normal;letter-spacing:-0.75px;">EMP_ID</div>
<div class="t" style="left:534.30px;top:257.35px;font-size:14px;color:#333;font-weight:normal;letter-spacing:0px;">integer</div>
<div class="a" style="left:371px;top:245px;width:3px;height:35px;background:#f39c12"></div>
<svg style="left:493.5px;top:259.2px;" width="15" height="10" viewBox="0 0 15 10"><path d="M4.2 9.6C1.8 9.6 0.4 8.4 0.4 6.9C0.4 5.2 2 4 4.2 4C5.2 4 6 4.3 6.6 4.7L12.3 0.6C13 0.1 14 0.3 14.4 1C14.7 1.5 14.6 2.1 14 2.5L8.1 6.4C8.1 8.3 6.6 9.6 4.2 9.6Z" fill="#5b88a9"/><circle cx="3.6" cy="7.2" r="0.8" fill="#fff" opacity="0.7"/></svg>
<div class="a" style="left:371px;top:314px;width:300px;height:1px;background:#dde6ee"></div>
<div class="t" style="left:383.00px;top:292.35px;font-size:14px;color:#333;font-weight:normal;letter-spacing:-0.75px;">FIRSTNAME</div>
<div class="t" style="left:534.30px;top:292.35px;font-size:14px;color:#333;font-weight:normal;letter-spacing:0px;">string</div>
<div class="a" style="left:371px;top:349px;width:300px;height:1px;background:#dde6ee"></div>
<div class="t" style="left:383.00px;top:327.35px;font-size:14px;color:#333;font-weight:normal;letter-spacing:-0.75px;">LASTNAME</div>
<div class="t" style="left:534.30px;top:327.35px;font-size:14px;color:#333;font-weight:normal;letter-spacing:0px;">string</div>
<div class="a" style="left:371px;top:384px;width:300px;height:1px;background:#dde6ee"></div>
<div class="t" style="left:383.00px;top:362.35px;font-size:14px;color:#333;font-weight:normal;letter-spacing:-0.75px;">STREET</div>
<div class="t" style="left:534.30px;top:362.35px;font-size:14px;color:#333;font-weight:normal;letter-spacing:0px;">string</div>
<div class="a" style="left:371px;top:419px;width:300px;height:1px;background:#dde6ee"></div>
<div class="t" style="left:383.00px;top:397.35px;font-size:14px;color:#333;font-weight:normal;letter-spacing:-0.75px;">CITY</div>
<div class="t" style="left:534.30px;top:397.35px;font-size:14px;color:#333;font-weight:normal;letter-spacing:0px;">string</div>
<div class="a" style="left:371px;top:454px;width:300px;height:1px;background:#dde6ee"></div>
<div class="t" style="left:383.00px;top:432.35px;font-size:14px;color:#333;font-weight:normal;letter-spacing:-0.75px;">STATE</div>
<div class="t" style="left:534.30px;top:432.35px;font-size:14px;color:#333;font-weight:normal;letter-spacing:0px;">string</div>
<div class="a" style="left:371px;top:489px;width:300px;height:1px;background:#dde6ee"></div>
<div class="t" style="left:383.00px;top:467.35px;font-size:14px;color:#333;font-weight:normal;letter-spacing:-0.75px;">ZIP</div>
<div class="t" style="left:534.30px;top:467.35px;font-size:14px;color:#333;font-weight:normal;letter-spacing:0px;">string</div>
<div class="a" style="left:371px;top:524px;width:300px;height:1px;background:#dde6ee"></div>
<div class="t" style="left:383.00px;top:502.35px;font-size:14px;color:#333;font-weight:normal;letter-spacing:-0.75px;">BIRTHDATE</div>
<div class="t" style="left:534.30px;top:502.35px;font-size:14px;color:#333;font-weight:normal;letter-spacing:0px;">date</div>
<div class="a" style="left:371px;top:559px;width:300px;height:1px;background:#dde6ee"></div>
<div class="t" style="left:383.00px;top:537.35px;font-size:14px;color:#333;font-weight:normal;letter-spacing:-0.75px;">PICURL</div>
<div class="t" style="left:534.30px;top:537.35px;font-size:14px;color:#333;font-weight:normal;letter-spacing:0px;">string</div>
<div class="a" style="left:371px;top:594px;width:300px;height:1px;background:#dde6ee"></div>
<div class="t" style="left:383.00px;top:572.35px;font-size:14px;color:#333;font-weight:normal;letter-spacing:-0.75px;">JOB_TITLE</div>
<div class="t" style="left:534.30px;top:572.35px;font-size:14px;color:#333;font-weight:normal;letter-spacing:0px;">string</div>
<div class="a" style="left:371px;top:629px;width:300px;height:1px;background:#dde6ee"></div>
<div class="t" style="left:383.00px;top:607.35px;font-size:14px;color:#333;font-weight:normal;letter-spacing:-0.75px;">DEPT_ID</div>
<div class="t" style="left:534.30px;top:607.35px;font-size:14px;color:#333;font-weight:normal;letter-spacing:0px;">integer</div>
<div class="a" style="left:668px;top:595px;width:3px;height:35px;background:#1f8a0f"></div>
<svg style="left:493px;top:609px;" width="15" height="12" viewBox="0 0 15 12"><path d="M4.2 11C2 11 0.7 9.7 0.7 8.1C0.7 6.3 2.2 5 4.3 5C5.1 5 5.8 5.2 6.4 5.6L12 1.2C12.7 0.6 13.8 0.8 14.2 1.6C14.5 2.2 14.3 2.9 13.7 3.3L8 7.3C8 9.5 6.5 11 4.2 11Z" fill="#c2d5e3" stroke="#7ea4bf" stroke-width="1.1"/><path d="M3 8.5L6 7" stroke="#7ea4bf" stroke-width="1"/></svg>
<div class="a" style="left:371px;top:664px;width:300px;height:1px;background:#dde6ee"></div>
<div class="t" style="left:383.00px;top:642.35px;font-size:14px;color:#333;font-weight:normal;letter-spacing:-0.75px;">USERNAME</div>
<div class="t" style="left:534.30px;top:642.35px;font-size:14px;color:#333;font-weight:normal;letter-spacing:0px;">string</div>
<div class="a" style="left:371px;top:699px;width:300px;height:1px;background:#dde6ee"></div>
<div class="t" style="left:383.00px;top:677.35px;font-size:14px;color:#333;font-weight:normal;letter-spacing:-0.75px;">PASSWORD</div>
<div class="t" style="left:534.30px;top:677.35px;font-size:14px;color:#333;font-weight:normal;letter-spacing:0px;">string</div>
<div class="a" style="left:371px;top:734px;width:300px;height:1px;background:#dde6ee"></div>
<div class="t" style="left:383.00px;top:712.35px;font-size:14px;color:#333;font-weight:normal;letter-spacing:-0.75px;">ROLE</div>
<div class="t" style="left:534.30px;top:712.35px;font-size:14px;color:#333;font-weight:normal;letter-spacing:0px;">string</div>
<div class="a" style="left:371px;top:769px;width:300px;height:1px;background:#dde6ee"></div>
<div class="t" style="left:383.00px;top:747.35px;font-size:14px;color:#333;font-weight:normal;letter-spacing:-0.75px;">MANAGER_ID</div>
<div class="t" style="left:534.30px;top:747.35px;font-size:14px;color:#333;font-weight:normal;letter-spacing:0px;">integer</div>
<div class="a" style="left:668px;top:735px;width:3px;height:35px;background:#1f8a0f"></div>
<svg style="left:493px;top:749px;" width="15" height="12" viewBox="0 0 15 12"><path d="M4.2 11C2 11 0.7 9.7 0.7 8.1C0.7 6.3 2.2 5 4.3 5C5.1 5 5.8 5.2 6.4 5.6L12 1.2C12.7 0.6 13.8 0.8 14.2 1.6C14.5 2.2 14.3 2.9 13.7 3.3L8 7.3C8 9.5 6.5 11 4.2 11Z" fill="#c2d5e3" stroke="#7ea4bf" stroke-width="1.1"/><path d="M3 8.5L6 7" stroke="#7ea4bf" stroke-width="1"/></svg>
<div class="t" style="left:383.00px;top:782.35px;font-size:14px;color:#333;font-weight:normal;letter-spacing:-0.75px;">TENANT_ID</div>
<div class="t" style="left:534.30px;top:782.35px;font-size:14px;color:#333;font-weight:normal;letter-spacing:0px;">integer</div>
<div class="a" style="left:785px;top:172px;width:302px;height:423px;border:1px solid #e0e6eb;border-radius:8px 8px 3px 3px;background:#fbfcfc;box-shadow:0 1px 5px rgba(60,80,100,0.10)"></div>
<div class="a" style="left:791px;top:178px;width:290px;height:67px;background:#d3eafc;border-radius:7px 7px 0 0"></div>
<div class="t" style="left:804.50px;top:192.73px;font-size:14.5px;color:#222;font-weight:normal;letter-spacing:-0.52px;-webkit-text-stroke:0.15px #222">DEPARTMENT</div>
<svg style="left:805px;top:216.5px;" width="15" height="10" viewBox="0 0 15 10"><path d="M4.2 9.6C1.8 9.6 0.4 8.4 0.4 6.9C0.4 5.2 2 4 4.2 4C5.2 4 6 4.3 6.6 4.7L12.3 0.6C13 0.1 14 0.3 14.4 1C14.7 1.5 14.6 2.1 14 2.5L8.1 6.4C8.1 8.3 6.6 9.6 4.2 9.6Z" fill="#5b88a9"/><circle cx="3.6" cy="7.2" r="0.8" fill="#fff" opacity="0.7"/></svg>
<div class="t" style="left:823.00px;top:216.72px;font-size:12.5px;color:#555;font-weight:normal;letter-spacing:-0.2px;">1 PK</div>
<div class="a" style="left:855px;top:223px;width:3px;height:3px;border-radius:50%;background:#777"></div>
<svg style="left:867.5px;top:215.5px;" width="15" height="12" viewBox="0 0 15 12"><path d="M4.2 11C2 11 0.7 9.7 0.7 8.1C0.7 6.3 2.2 5 4.3 5C5.1 5 5.8 5.2 6.4 5.6L12 1.2C12.7 0.6 13.8 0.8 14.2 1.6C14.5 2.2 14.3 2.9 13.7 3.3L8 7.3C8 9.5 6.5 11 4.2 11Z" fill="#c2d5e3" stroke="#7ea4bf" stroke-width="1.1"/><path d="M3 8.5L6 7" stroke="#7ea4bf" stroke-width="1"/></svg>
<div class="t" style="left:886.00px;top:216.72px;font-size:12.5px;color:#555;font-weight:normal;letter-spacing:-0.2px;">0 FK</div>
<div class="a" style="left:918px;top:223px;width:3px;height:3px;border-radius:50%;background:#777"></div>
<div class="t" style="left:930.30px;top:216.72px;font-size:12.5px;color:#555;font-weight:normal;letter-spacing:-0.1px;">10 Columns</div>
<svg style="left:1028.5px;top:198px;" width="26" height="25" viewBox="0 0 26 25"><rect x="1" y="1" width="24" height="23" rx="4.5" fill="none" stroke="#2b95f0" stroke-width="1.7"/><path d="M7.5 6.5C10 6.5 12.5 6.8 12.8 9.5V15C13.2 17.5 15.5 18.3 18.5 18.3" fill="none" stroke="#2b95f0" stroke-width="1.9" stroke-linecap="round"/><circle cx="7.3" cy="6.5" r="1.6" fill="#2b95f0"/><circle cx="18.7" cy="18.3" r="1.6" fill="#2b95f0"/></svg>
<div class="a" style="left:936px;top:245px;width:1px;height:350px;background:#dde6ee"></div>
<div class="a" style="left:786px;top:279px;width:300px;height:1px;background:#dde6ee"></div>
<div class="t" style="left:798.00px;top:257.35px;font-size:14px;color:#333;font-weight:normal;letter-spacing:-0.75px;">DEPT_ID</div>
<div class="t" style="left:949.30px;top:257.35px;font-size:14px;color:#333;font-weight:normal;letter-spacing:0px;">integer</div>
<div class="a" style="left:786px;top:245px;width:3px;height:35px;background:#f39c12"></div>
<svg style="left:908.5px;top:259.2px;" width="15" height="10" viewBox="0 0 15 10"><path d="M4.2 9.6C1.8 9.6 0.4 8.4 0.4 6.9C0.4 5.2 2 4 4.2 4C5.2 4 6 4.3 6.6 4.7L12.3 0.6C13 0.1 14 0.3 14.4 1C14.7 1.5 14.6 2.1 14 2.5L8.1 6.4C8.1 8.3 6.6 9.6 4.2 9.6Z" fill="#5b88a9"/><circle cx="3.6" cy="7.2" r="0.8" fill="#fff" opacity="0.7"/></svg>
<div class="a" style="left:786px;top:314px;width:300px;height:1px;background:#dde6ee"></div>
<div class="t" style="left:798.00px;top:292.35px;font-size:14px;color:#333;font-weight:normal;letter-spacing:-0.75px;">NAME</div>
<div class="t" style="left:949.30px;top:292.35px;font-size:14px;color:#333;font-weight:normal;letter-spacing:0px;">string</div>
<div class="a" style="left:786px;top:349px;width:300px;height:1px;background:#dde6ee"></div>
<div class="t" style="left:798.00px;top:327.35px;font-size:14px;color:#333;font-weight:normal;letter-spacing:-0.75px;">BUDGET</div>
<div class="t" style="left:949.30px;top:327.35px;font-size:14px;color:#333;font-weight:normal;letter-spacing:0px;">integer</div>
<div class="a" style="left:786px;top:384px;width:300px;height:1px;background:#dde6ee"></div>
<div class="t" style="left:798.00px;top:362.35px;font-size:14px;color:#333;font-weight:normal;letter-spacing:-0.75px;">Q1</div>
<div class="t" style="left:949.30px;top:362.35px;font-size:14px;color:#333;font-weight:normal;letter-spacing:0px;">integer</div>
<div class="a" style="left:786px;top:419px;width:300px;height:1px;background:#dde6ee"></div>
<div class="t" style="left:798.00px;top:397.35px;font-size:14px;color:#333;font-weight:normal;letter-spacing:-0.75px;">Q2</div>
<div class="t" style="left:949.30px;top:397.35px;font-size:14px;color:#333;font-weight:normal;letter-spacing:0px;">integer</div>
<div class="a" style="left:786px;top:454px;width:300px;height:1px;background:#dde6ee"></div>
<div class="t" style="left:798.00px;top:432.35px;font-size:14px;color:#333;font-weight:normal;letter-spacing:-0.75px;">Q3</div>
<div class="t" style="left:949.30px;top:432.35px;font-size:14px;color:#333;font-weight:normal;letter-spacing:0px;">integer</div>
<div class="a" style="left:786px;top:489px;width:300px;height:1px;background:#dde6ee"></div>
<div class="t" style="left:798.00px;top:467.35px;font-size:14px;color:#333;font-weight:normal;letter-spacing:-0.75px;">Q4</div>
<div class="t" style="left:949.30px;top:467.35px;font-size:14px;color:#333;font-weight:normal;letter-spacing:0px;">integer</div>
<div class="a" style="left:786px;top:524px;width:300px;height:1px;background:#dde6ee"></div>
<div class="t" style="left:798.00px;top:502.35px;font-size:14px;color:#333;font-weight:normal;letter-spacing:-0.75px;">DEPT_CODE</div>
<div class="t" style="left:949.30px;top:502.35px;font-size:14px;color:#333;font-weight:normal;letter-spacing:0px;">string</div>
<div class="a" style="left:786px;top:559px;width:300px;height:1px;background:#dde6ee"></div>
<div class="t" style="left:798.00px;top:537.35px;font-size:14px;color:#333;font-weight:normal;letter-spacing:-0.75px;">LOCATION</div>
<div class="t" style="left:949.30px;top:537.35px;font-size:14px;color:#333;font-weight:normal;letter-spacing:0px;">string</div>
<div class="t" style="left:798.00px;top:572.35px;font-size:14px;color:#333;font-weight:normal;letter-spacing:-0.75px;">TENANT_ID</div>
<div class="t" style="left:949.30px;top:572.35px;font-size:14px;color:#333;font-weight:normal;letter-spacing:0px;">integer</div>
<div class="a" style="left:1201px;top:172px;width:301px;height:318px;border:1px solid #e0e6eb;border-radius:8px 8px 3px 3px;background:#fbfcfc;box-shadow:0 1px 5px rgba(60,80,100,0.10)"></div>
<div class="a" style="left:1207px;top:178px;width:289px;height:67px;background:#d3eafc;border-radius:7px 7px 0 0"></div>
<div class="t" style="left:1220.50px;top:192.73px;font-size:14.5px;color:#222;font-weight:normal;letter-spacing:-0.4px;-webkit-text-stroke:0.15px #222">VACATION</div>
<svg style="left:1221px;top:216.5px;" width="15" height="10" viewBox="0 0 15 10"><path d="M4.2 9.6C1.8 9.6 0.4 8.4 0.4 6.9C0.4 5.2 2 4 4.2 4C5.2 4 6 4.3 6.6 4.7L12.3 0.6C13 0.1 14 0.3 14.4 1C14.7 1.5 14.6 2.1 14 2.5L8.1 6.4C8.1 8.3 6.6 9.6 4.2 9.6Z" fill="#5b88a9"/><circle cx="3.6" cy="7.2" r="0.8" fill="#fff" opacity="0.7"/></svg>
<div class="t" style="left:1239.00px;top:216.72px;font-size:12.5px;color:#555;font-weight:normal;letter-spacing:-0.2px;">1 PK</div>
<div class="a" style="left:1271px;top:223px;width:3px;height:3px;border-radius:50%;background:#777"></div>
<svg style="left:1283.5px;top:215.5px;" width="15" height="12" viewBox="0 0 15 12"><path d="M4.2 11C2 11 0.7 9.7 0.7 8.1C0.7 6.3 2.2 5 4.3 5C5.1 5 5.8 5.2 6.4 5.6L12 1.2C12.7 0.6 13.8 0.8 14.2 1.6C14.5 2.2 14.3 2.9 13.7 3.3L8 7.3C8 9.5 6.5 11 4.2 11Z" fill="#c2d5e3" stroke="#7ea4bf" stroke-width="1.1"/><path d="M3 8.5L6 7" stroke="#7ea4bf" stroke-width="1"/></svg>
<div class="t" style="left:1302.00px;top:216.72px;font-size:12.5px;color:#555;font-weight:normal;letter-spacing:-0.2px;">1 FK</div>
<div class="a" style="left:1334px;top:223px;width:3px;height:3px;border-radius:50%;background:#777"></div>
<div class="t" style="left:1346.30px;top:216.72px;font-size:12.5px;color:#555;font-weight:normal;letter-spacing:-0.1px;">7 Columns</div>
<svg style="left:1444.5px;top:198px;" width="26" height="25" viewBox="0 0 26 25"><rect x="1" y="1" width="24" height="23" rx="4.5" fill="none" stroke="#2b95f0" stroke-width="1.7"/><path d="M7.5 6.5C10 6.5 12.5 6.8 12.8 9.5V15C13.2 17.5 15.5 18.3 18.5 18.3" fill="none" stroke="#2b95f0" stroke-width="1.9" stroke-linecap="round"/><circle cx="7.3" cy="6.5" r="1.6" fill="#2b95f0"/><circle cx="18.7" cy="18.3" r="1.6" fill="#2b95f0"/></svg>
<div class="a" style="left:1351.5px;top:245px;width:1px;height:245px;background:#dde6ee"></div>
<div class="a" style="left:1202px;top:279px;width:299px;height:1px;background:#dde6ee"></div>
<div class="t" style="left:1214.00px;top:257.35px;font-size:14px;color:#333;font-weight:normal;letter-spacing:-0.75px;">ID</div>
<div class="t" style="left:1364.80px;top:257.35px;font-size:14px;color:#333;font-weight:normal;letter-spacing:0px;">integer</div>
<svg style="left:1324.5px;top:259.2px;" width="15" height="10" viewBox="0 0 15 10"><path d="M4.2 9.6C1.8 9.6 0.4 8.4 0.4 6.9C0.4 5.2 2 4 4.2 4C5.2 4 6 4.3 6.6 4.7L12.3 0.6C13 0.1 14 0.3 14.4 1C14.7 1.5 14.6 2.1 14 2.5L8.1 6.4C8.1 8.3 6.6 9.6 4.2 9.6Z" fill="#5b88a9"/><circle cx="3.6" cy="7.2" r="0.8" fill="#fff" opacity="0.7"/></svg>
<div class="a" style="left:1202px;top:314px;width:299px;height:1px;background:#dde6ee"></div>
<div class="t" style="left:1214.00px;top:292.35px;font-size:14px;color:#333;font-weight:normal;letter-spacing:-0.75px;">START_DATE</div>
<div class="t" style="left:1364.80px;top:292.35px;font-size:14px;color:#333;font-weight:normal;letter-spacing:0px;">date</div>
<div class="a" style="left:1202px;top:349px;width:299px;height:1px;background:#dde6ee"></div>
<div class="t" style="left:1214.00px;top:327.35px;font-size:14px;color:#333;font-weight:normal;letter-spacing:-0.75px;">END_DATE</div>
<div class="t" style="left:1364.80px;top:327.35px;font-size:14px;color:#333;font-weight:normal;letter-spacing:0px;">date</div>
<div class="a" style="left:1202px;top:384px;width:299px;height:1px;background:#dde6ee"></div>
<div class="t" style="left:1214.00px;top:362.35px;font-size:14px;color:#333;font-weight:normal;letter-spacing:-0.75px;">EMP_ID</div>
<div class="t" style="left:1364.80px;top:362.35px;font-size:14px;color:#333;font-weight:normal;letter-spacing:0px;">integer</div>
<div class="a" style="left:1498px;top:350px;width:3px;height:35px;background:#1f8a0f"></div>
<svg style="left:1324px;top:364px;" width="15" height="12" viewBox="0 0 15 12"><path d="M4.2 11C2 11 0.7 9.7 0.7 8.1C0.7 6.3 2.2 5 4.3 5C5.1 5 5.8 5.2 6.4 5.6L12 1.2C12.7 0.6 13.8 0.8 14.2 1.6C14.5 2.2 14.3 2.9 13.7 3.3L8 7.3C8 9.5 6.5 11 4.2 11Z" fill="#c2d5e3" stroke="#7ea4bf" stroke-width="1.1"/><path d="M3 8.5L6 7" stroke="#7ea4bf" stroke-width="1"/></svg>
<div class="a" style="left:1202px;top:419px;width:299px;height:1px;background:#dde6ee"></div>
<div class="t" style="left:1214.00px;top:397.35px;font-size:14px;color:#333;font-weight:normal;letter-spacing:-0.75px;">TENANT_ID</div>
<div class="t" style="left:1364.80px;top:397.35px;font-size:14px;color:#333;font-weight:normal;letter-spacing:0px;">integer</div>
<div class="a" style="left:1202px;top:454px;width:299px;height:1px;background:#dde6ee"></div>
<div class="t" style="left:1214.00px;top:432.35px;font-size:14px;color:#333;font-weight:normal;letter-spacing:-0.75px;">STATUS</div>
<div class="t" style="left:1364.80px;top:432.35px;font-size:14px;color:#333;font-weight:normal;letter-spacing:0px;">string</div>
<div class="t" style="left:1214.00px;top:467.35px;font-size:14px;color:#333;font-weight:normal;letter-spacing:-0.75px;">TYPE</div>
<div class="t" style="left:1364.80px;top:467.35px;font-size:14px;color:#333;font-weight:normal;letter-spacing:0px;">string</div>
<div class="a" style="left:605px;top:172px;width:67px;height:18.5px;background:#2196f3"></div>
<div class="t" style="left:610.30px;top:175.56px;font-size:10.8px;color:#ffffff;font-weight:bold;letter-spacing:-0.4px;">EMPLOYEE</div>
<div class="a" style="left:594px;top:186px;width:74px;height:51px;border:5px solid #f6802a"></div>
<div class="a" style="left:674px;top:595.3px;width:28px;height:28px;border-radius:50%;background:#f0f4e5;border:1.3px solid #a9c46f"></div>
<svg style="left:679.5px;top:601.3px;" width="17" height="16" viewBox="0 0 17 16"><g fill="none" stroke="#111" stroke-width="1.3"><circle cx="3.3" cy="3" r="2"/><circle cx="3.3" cy="13" r="2"/><circle cx="13.5" cy="8" r="2"/><path d="M5.2 3.5C7.5 4 8.3 5 8.3 8C8.3 11 7.5 12 5.2 12.5M8.3 8H11.5"/></g></svg>
<div class="a" style="left:674px;top:735.6px;width:28px;height:28px;border-radius:50%;background:#f0f4e5;border:1.3px solid #a9c46f"></div>
<svg style="left:679.5px;top:741.6px;" width="17" height="16" viewBox="0 0 17 16"><g fill="none" stroke="#111" stroke-width="1.3"><circle cx="3.3" cy="3" r="2"/><circle cx="3.3" cy="13" r="2"/><circle cx="13.5" cy="8" r="2"/><path d="M5.2 3.5C7.5 4 8.3 5 8.3 8C8.3 11 7.5 12 5.2 12.5M8.3 8H11.5"/></g></svg>
<div class="a" style="left:1502px;top:350.4px;width:28px;height:28px;border-radius:50%;background:#f0f4e5;border:1.3px solid #a9c46f"></div>
<svg style="left:1507.5px;top:356.4px;" width="17" height="16" viewBox="0 0 17 16"><g fill="none" stroke="#111" stroke-width="1.3"><circle cx="3.3" cy="3" r="2"/><circle cx="3.3" cy="13" r="2"/><circle cx="13.5" cy="8" r="2"/><path d="M5.2 3.5C7.5 4 8.3 5 8.3 8C8.3 11 7.5 12 5.2 12.5M8.3 8H11.5"/></g></svg>
<div class="a" style="left:1548px;top:106px;width:21px;height:783px;background:#f1f1f1"></div>
<svg style="left:1553.5px;top:114px;" width="10" height="6" viewBox="0 0 10 6"><path d="M0.5 5.5L5 0.5L9.5 5.5Z" fill="#a3a3a3"/></svg>
<div class="a" style="left:1550px;top:127px;width:17px;height:588px;background:#c1c1c1"></div>
<svg style="left:1553.5px;top:874px;" width="10" height="6" viewBox="0 0 10 6"><path d="M0.5 0.5L5 5.5L9.5 0.5Z" fill="#505050"/></svg>
<div class="a" style="left:314px;top:889px;width:1234px;height:18px;background:#f1f1f1"></div>
<svg style="left:321.5px;top:894.5px;" width="6" height="10" viewBox="0 0 6 10"><path d="M5.5 0.5L0.5 5L5.5 9.5Z" fill="#505050"/></svg>
<div class="a" style="left:357px;top:891px;width:1162.5px;height:16px;background:#c1c1c1"></div>
<svg style="left:1534.5px;top:893.5px;" width="6" height="10" viewBox="0 0 6 10"><path d="M0.5 0.5L5.5 5L0.5 9.5Z" fill="#505050"/></svg>
<div class="a" style="left:1548px;top:889px;width:21px;height:18px;background:#dcdcdc"></div>
<div class="t" style="left:1585.50px;top:74.09px;font-size:17.5px;color:#ffffff;font-weight:normal;letter-spacing:-0.95px;-webkit-text-stroke:0.3px #fff">TABLE: EMPLOYEE</div>
<div class="a" style="left:1570px;top:105px;width:70px;height:46px;background:#2b2b2b"></div>
<div class="a" style="left:1570px;top:105px;width:70px;height:2px;background:#2196f3"></div>
<svg style="left:1593px;top:115.5px;" width="27" height="27" viewBox="0 0 27 27"><g fill="none" stroke="#ffffff" stroke-width="2" stroke-linecap="round" stroke-linejoin="round"><path d="M13.5 2.3H6Q2.3 2.3 2.3 6V20.8Q2.3 24.5 6 24.5H21Q24.7 24.5 24.7 20.8V12.5"/><path d="M8.6 18.4L9.3 13.4L19.6 3.1Q21.7 1 23.8 3.1L24.2 3.5Q26.3 5.6 24.2 7.7L13.9 18Z"/><path d="M17.8 5L22.3 9.5"/></g></svg>
<div class="t" style="left:1583.00px;top:164.46px;font-size:16px;color:#ffffff;font-weight:normal;letter-spacing:0px;-webkit-text-stroke:0.3px #fff">Details</div>
<div class="t" style="left:1583.00px;top:203.50px;font-size:15px;color:#c6c6c6;font-weight:normal;letter-spacing:-0.1px;">Name</div>
<div class="t" style="left:1625.00px;top:203.50px;font-size:15px;color:#e53935;font-weight:normal;letter-spacing:0px;">*</div>
<div class="a" style="left:1583px;top:229.2px;width:277px;height:34.5px;border-radius:4.5px;background:#404040"></div>
<div class="t" style="left:1596.50px;top:240.25px;font-size:14px;color:#cccccc;font-weight:normal;letter-spacing:-0.9px;">EMPLOYEE</div>
<div class="t" style="left:1583.00px;top:284.30px;font-size:15px;color:#c6c6c6;font-weight:normal;letter-spacing:-0.1px;">Entity Name</div>
<div class="a" style="left:1583px;top:310.3px;width:277px;height:34.5px;border-radius:4.5px;background:#404040"></div>
<div class="t" style="left:1596.50px;top:321.35px;font-size:14px;color:#cccccc;font-weight:normal;letter-spacing:-0.3px;">Employee</div>
<div class="t" style="left:1583.00px;top:365.30px;font-size:15px;color:#c6c6c6;font-weight:normal;letter-spacing:-0.1px;">Type</div>
<div class="a" style="left:1583px;top:391.3px;width:277px;height:34.5px;border-radius:4.5px;background:#404040"></div>
<div class="t" style="left:1596.50px;top:402.35px;font-size:14px;color:#cccccc;font-weight:normal;letter-spacing:-0.3px;">table</div>
<div class="t" style="left:1583.00px;top:445.90px;font-size:15px;color:#c6c6c6;font-weight:normal;letter-spacing:-0.1px;">Schema</div>
<div class="a" style="left:1583px;top:471.1px;width:277px;height:34.5px;border-radius:4.5px;background:#404040"></div>
<div class="t" style="left:1596.50px;top:482.15px;font-size:14px;color:#cccccc;font-weight:normal;letter-spacing:-0.9px;">PUBLIC</div>
<svg style="left:1839.5px;top:485.1px;" width="13" height="8" viewBox="0 0 13 8"><path d="M1.5 1.5L6.5 6.5L11.5 1.5" fill="none" stroke="#8c8c8c" stroke-width="1.8"/></svg>
<div class="t" style="left:1583.00px;top:526.30px;font-size:15px;color:#c6c6c6;font-weight:normal;letter-spacing:-0.1px;">Catalog</div>
<div class="t" style="left:1638.50px;top:526.30px;font-size:15px;color:#e53935;font-weight:normal;letter-spacing:0px;">*</div>
<div class="a" style="left:1583px;top:552.1px;width:277px;height:34.5px;border-radius:4.5px;background:#404040"></div>
<div class="t" style="left:1596.50px;top:563.15px;font-size:14px;color:#cccccc;font-weight:normal;letter-spacing:-0.9px;">PUBLIC</div>
<div class="t" style="left:1583.00px;top:606.70px;font-size:15px;color:#c6c6c6;font-weight:normal;letter-spacing:-0.1px;">Default Filter Expression</div>
<div class="a" style="left:1583px;top:633.4px;width:277px;height:34.5px;border-radius:4.5px;background:#222222;border:1px solid #3a3a3a"></div>
<div class="a" style="left:1570px;top:685px;width:329px;height:2px;background:#222222"></div>
<div class="t" style="left:1583.00px;top:705.96px;font-size:16px;color:#ffffff;font-weight:normal;letter-spacing:0px;-webkit-text-stroke:0.3px #fff">Primary Key</div>
<div class="t" style="left:1583.00px;top:744.70px;font-size:15px;color:#c6c6c6;font-weight:normal;letter-spacing:-0.1px;">Type</div>
<div class="a" style="left:1583px;top:771.2px;width:277px;height:34.5px;border-radius:4.5px;background:#404040"></div>
<div class="t" style="left:1596.50px;top:782.25px;font-size:14px;color:#cccccc;font-weight:normal;letter-spacing:-0.3px;">single</div>
<svg style="left:1839.5px;top:785.2px;" width="13" height="8" viewBox="0 0 13 8"><path d="M1.5 1.5L6.5 6.5L11.5 1.5" fill="none" stroke="#e6e6e6" stroke-width="1.8"/></svg>
<div class="t" style="left:1583.00px;top:825.50px;font-size:15px;color:#c6c6c6;font-weight:normal;letter-spacing:-0.1px;">Select Column</div>
<div class="a" style="left:1583px;top:852px;width:277px;height:34.5px;border-radius:4.5px;background:#404040"></div>
<div class="t" style="left:1596.50px;top:863.05px;font-size:14px;color:#cccccc;font-weight:normal;letter-spacing:-0.9px;">EMP_ID</div>
<svg style="left:1839.5px;top:866px;" width="13" height="8" viewBox="0 0 13 8"><path d="M1.5 1.5L6.5 6.5L11.5 1.5" fill="none" stroke="#8c8c8c" stroke-width="1.8"/></svg>
<div class="a" style="left:1899px;top:151px;width:21px;height:756px;background:#f1f1f1"></div>
<svg style="left:1904.5px;top:158.5px;" width="10" height="6" viewBox="0 0 10 6"><path d="M0.5 5.5L5 0.5L9.5 5.5Z" fill="#a3a3a3"/></svg>
<div class="a" style="left:1902px;top:171px;width:15.5px;height:573px;background:#a8a8a8"></div>
<svg style="left:1904.5px;top:897px;" width="10" height="6" viewBox="0 0 10 6"><path d="M0.5 0.5L5 5.5L9.5 0.5Z" fill="#505050"/></svg>
</body></html>
